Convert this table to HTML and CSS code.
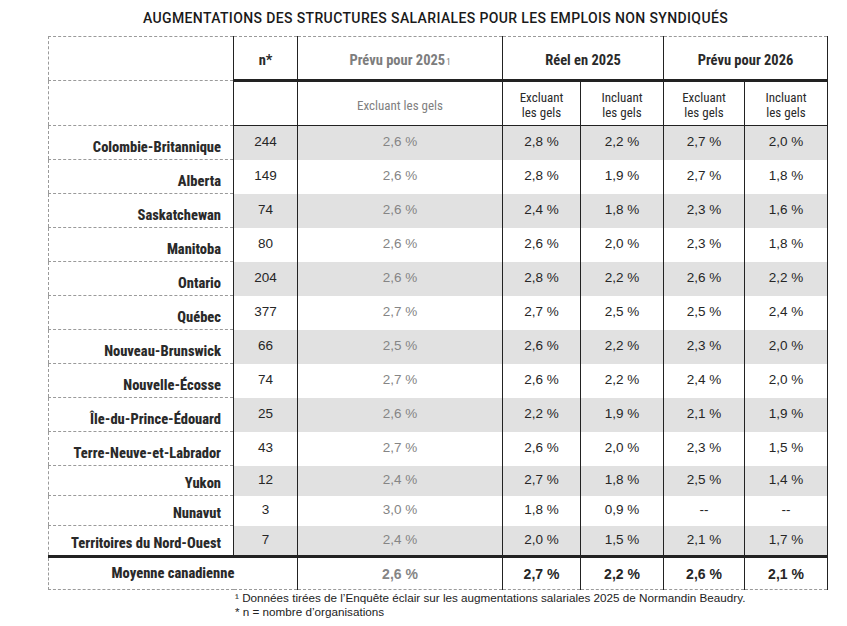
FILE: index.html
```html
<!DOCTYPE html>
<html lang="fr">
<head>
<meta charset="utf-8">
<link rel="stylesheet" href="styles.css">
</head>
<body>
<div class="page">
  <h1 class="title">AUGMENTATIONS DES STRUCTURES SALARIALES POUR LES EMPLOIS NON SYNDIQUÉS</h1>
  <table class="grid">
    <colgroup>
      <col class="c-label"><col class="c-n"><col class="c-prev"><col class="c-r1"><col class="c-r2"><col class="c-p1"><col class="c-p2">
    </colgroup>
    <thead>
      <tr class="h1">
        <th class="lab"></th>
        <th class="dat">n*</th>
        <th class="dat grey">Prévu pour 2025<span class="sub">1</span></th>
        <th class="dat" colspan="2">Réel en 2025</th>
        <th class="dat" colspan="2">Prévu pour 2026</th>
      </tr>
      <tr class="h2">
        <th class="lab"></th>
        <th class="dat"></th>
        <th class="dat grey">Excluant les gels</th>
        <th class="dat">Excluant<br>les gels</th>
        <th class="dat">Incluant<br>les gels</th>
        <th class="dat">Excluant<br>les gels</th>
        <th class="dat">Incluant<br>les gels</th>
      </tr>
    </thead>
    <tbody>
      <tr class="r odd"><th class="lab">Colombie-Britannique</th><td>244</td><td class="grey">2,6 %</td><td>2,8 %</td><td>2,2 %</td><td>2,7 %</td><td>2,0 %</td></tr>
      <tr class="r"><th class="lab">Alberta</th><td>149</td><td class="grey">2,6 %</td><td>2,8 %</td><td>1,9 %</td><td>2,7 %</td><td>1,8 %</td></tr>
      <tr class="r odd"><th class="lab">Saskatchewan</th><td>74</td><td class="grey">2,6 %</td><td>2,4 %</td><td>1,8 %</td><td>2,3 %</td><td>1,6 %</td></tr>
      <tr class="r"><th class="lab">Manitoba</th><td>80</td><td class="grey">2,6 %</td><td>2,6 %</td><td>2,0 %</td><td>2,3 %</td><td>1,8 %</td></tr>
      <tr class="r odd"><th class="lab">Ontario</th><td>204</td><td class="grey">2,6 %</td><td>2,8 %</td><td>2,2 %</td><td>2,6 %</td><td>2,2 %</td></tr>
      <tr class="r"><th class="lab">Québec</th><td>377</td><td class="grey">2,7 %</td><td>2,7 %</td><td>2,5 %</td><td>2,5 %</td><td>2,4 %</td></tr>
      <tr class="r odd"><th class="lab">Nouveau-Brunswick</th><td>66</td><td class="grey">2,5 %</td><td>2,6 %</td><td>2,2 %</td><td>2,3 %</td><td>2,0 %</td></tr>
      <tr class="r"><th class="lab">Nouvelle-Écosse</th><td>74</td><td class="grey">2,7 %</td><td>2,6 %</td><td>2,2 %</td><td>2,4 %</td><td>2,0 %</td></tr>
      <tr class="r odd"><th class="lab">Île-du-Prince-Édouard</th><td>25</td><td class="grey">2,6 %</td><td>2,2 %</td><td>1,9 %</td><td>2,1 %</td><td>1,9 %</td></tr>
      <tr class="r"><th class="lab">Terre-Neuve-et-Labrador</th><td>43</td><td class="grey">2,7 %</td><td>2,6 %</td><td>2,0 %</td><td>2,3 %</td><td>1,5 %</td></tr>
      <tr class="r odd short"><th class="lab">Yukon</th><td>12</td><td class="grey">2,4 %</td><td>2,7 %</td><td>1,8 %</td><td>2,5 %</td><td>1,4 %</td></tr>
      <tr class="r short"><th class="lab">Nunavut</th><td>3</td><td class="grey">3,0 %</td><td>1,8 %</td><td>0,9 %</td><td>--</td><td>--</td></tr>
      <tr class="r odd short last"><th class="lab">Territoires du Nord-Ouest</th><td>7</td><td class="grey">2,4 %</td><td>2,0 %</td><td>1,5 %</td><td>2,1 %</td><td>1,7 %</td></tr>
    </tbody>
    <tfoot>
      <tr class="total">
        <th class="lab-total" colspan="2">Moyenne canadienne</th>
        <td class="grey">2,6 %</td><td>2,7 %</td><td>2,2 %</td><td>2,6 %</td><td>2,1 %</td>
      </tr>
    </tfoot>
  </table>
  <div class="notes">
    <p>¹ Données tirées de l’Enquête éclair sur les augmentations salariales 2025 de Normandin Beaudry.</p>
    <p>* n = nombre d’organisations</p>
  </div>
</div>
</body>
</html>
```
FILE: styles.css
```css
html, body {
  margin: 0;
  padding: 0;
  background: #ffffff;
}
.page {
  width: 779px;
  padding: 0 0 0 48px;
}
.title {
  margin: 0;
  height: 36px;
  line-height: 37px;
  text-align: center;
  font-family: "Roboto", "Liberation Sans", sans-serif;
  font-weight: 500;
  font-size: 14px;
  letter-spacing: 0.37px;
  color: #1a1a1a;
  padding-right: 4px;
}
.grid {
  width: 779px;
  table-layout: fixed;
  border-collapse: collapse;
  border-top: 1px dashed #9a9a9a;
  border-left: 1px dashed #9a9a9a;
  border-bottom: 1px dashed #9a9a9a;
  border-right: 1px solid #222;
}
.c-label { width: 185px; }
.c-n { width: 64px; }
.c-prev { width: 205px; }
.c-r1 { width: 78px; }
.c-r2 { width: 83px; }
.c-p1 { width: 81px; }
.c-p2 { width: 83px; }

th, td {
  padding: 0;
  text-align: center;
}
.grid th.lab {
  border-bottom: 1px dashed #9a9a9a;
  border-right: 1px solid #222;
  background: #fff;
  text-align: right;
  vertical-align: bottom;
  padding: 0 12px 3px 0;
  font-family: "Roboto Condensed", "Roboto", sans-serif;
  font-weight: 800;
  font-size: 14.5px;
  color: #2a2a2a;
  line-height: 16px;
}
.h1 { height: 44px; }
.h1 .dat {
  border-left: 1px solid #222;
  border-bottom: 3px solid #222;
  font-family: "Roboto Condensed", "Roboto", sans-serif;
  font-weight: 700;
  font-size: 14.5px;
  color: #2a2a2a;
  padding-top: 4px;
}
.h1 .dat.grey { color: #7d7d7d; }
.sub {
  font-size: 9px;
  font-weight: 400;
  margin-left: 1px;
}
.h2 { height: 45px; }
.h2 .dat {
  border-left: 1px solid #222;
  border-bottom: 1px solid #222;
  font-family: "Roboto Condensed", "Roboto", sans-serif;
  font-weight: 400;
  font-size: 13px;
  line-height: 15px;
  color: #2a2a2a;
  padding-top: 3px;
}
.h2 .dat.grey { color: #808080; }

.r { height: 34px; }
.r.short { height: 30px; }
.r.last { height: 31px; }
.r td {
  border-left: 1px solid #222;
  font-family: "Liberation Sans", Arial, sans-serif;
  font-size: 13.5px;
  color: #262626;
  padding-bottom: 2px;
}
.r.odd td { background: #e1e1e1; }
.r td.grey { color: #858585; }
.r.last th.lab { border-bottom: 3px solid #222; }
.r.last td { border-bottom: 3px solid #222; }

.total { height: 33px; }
.total td {
  border-left: 1px solid #222;
  font-family: "Liberation Sans", Arial, sans-serif;
  font-weight: 700;
  font-size: 14px;
  color: #262626;
}
.total td.grey { color: #858585; }
.lab-total {
  font-family: "Roboto Condensed", "Roboto", sans-serif;
  font-weight: 800;
  font-size: 14.5px;
  color: #2a2a2a;
  text-align: center;
}
.notes {
  padding-left: 187px;
  padding-top: 1px;
  font-family: "Liberation Sans", Arial, sans-serif;
  font-size: 11.7px;
  color: #222;
  line-height: 14px;
}
.notes p { margin: 0; }
```
